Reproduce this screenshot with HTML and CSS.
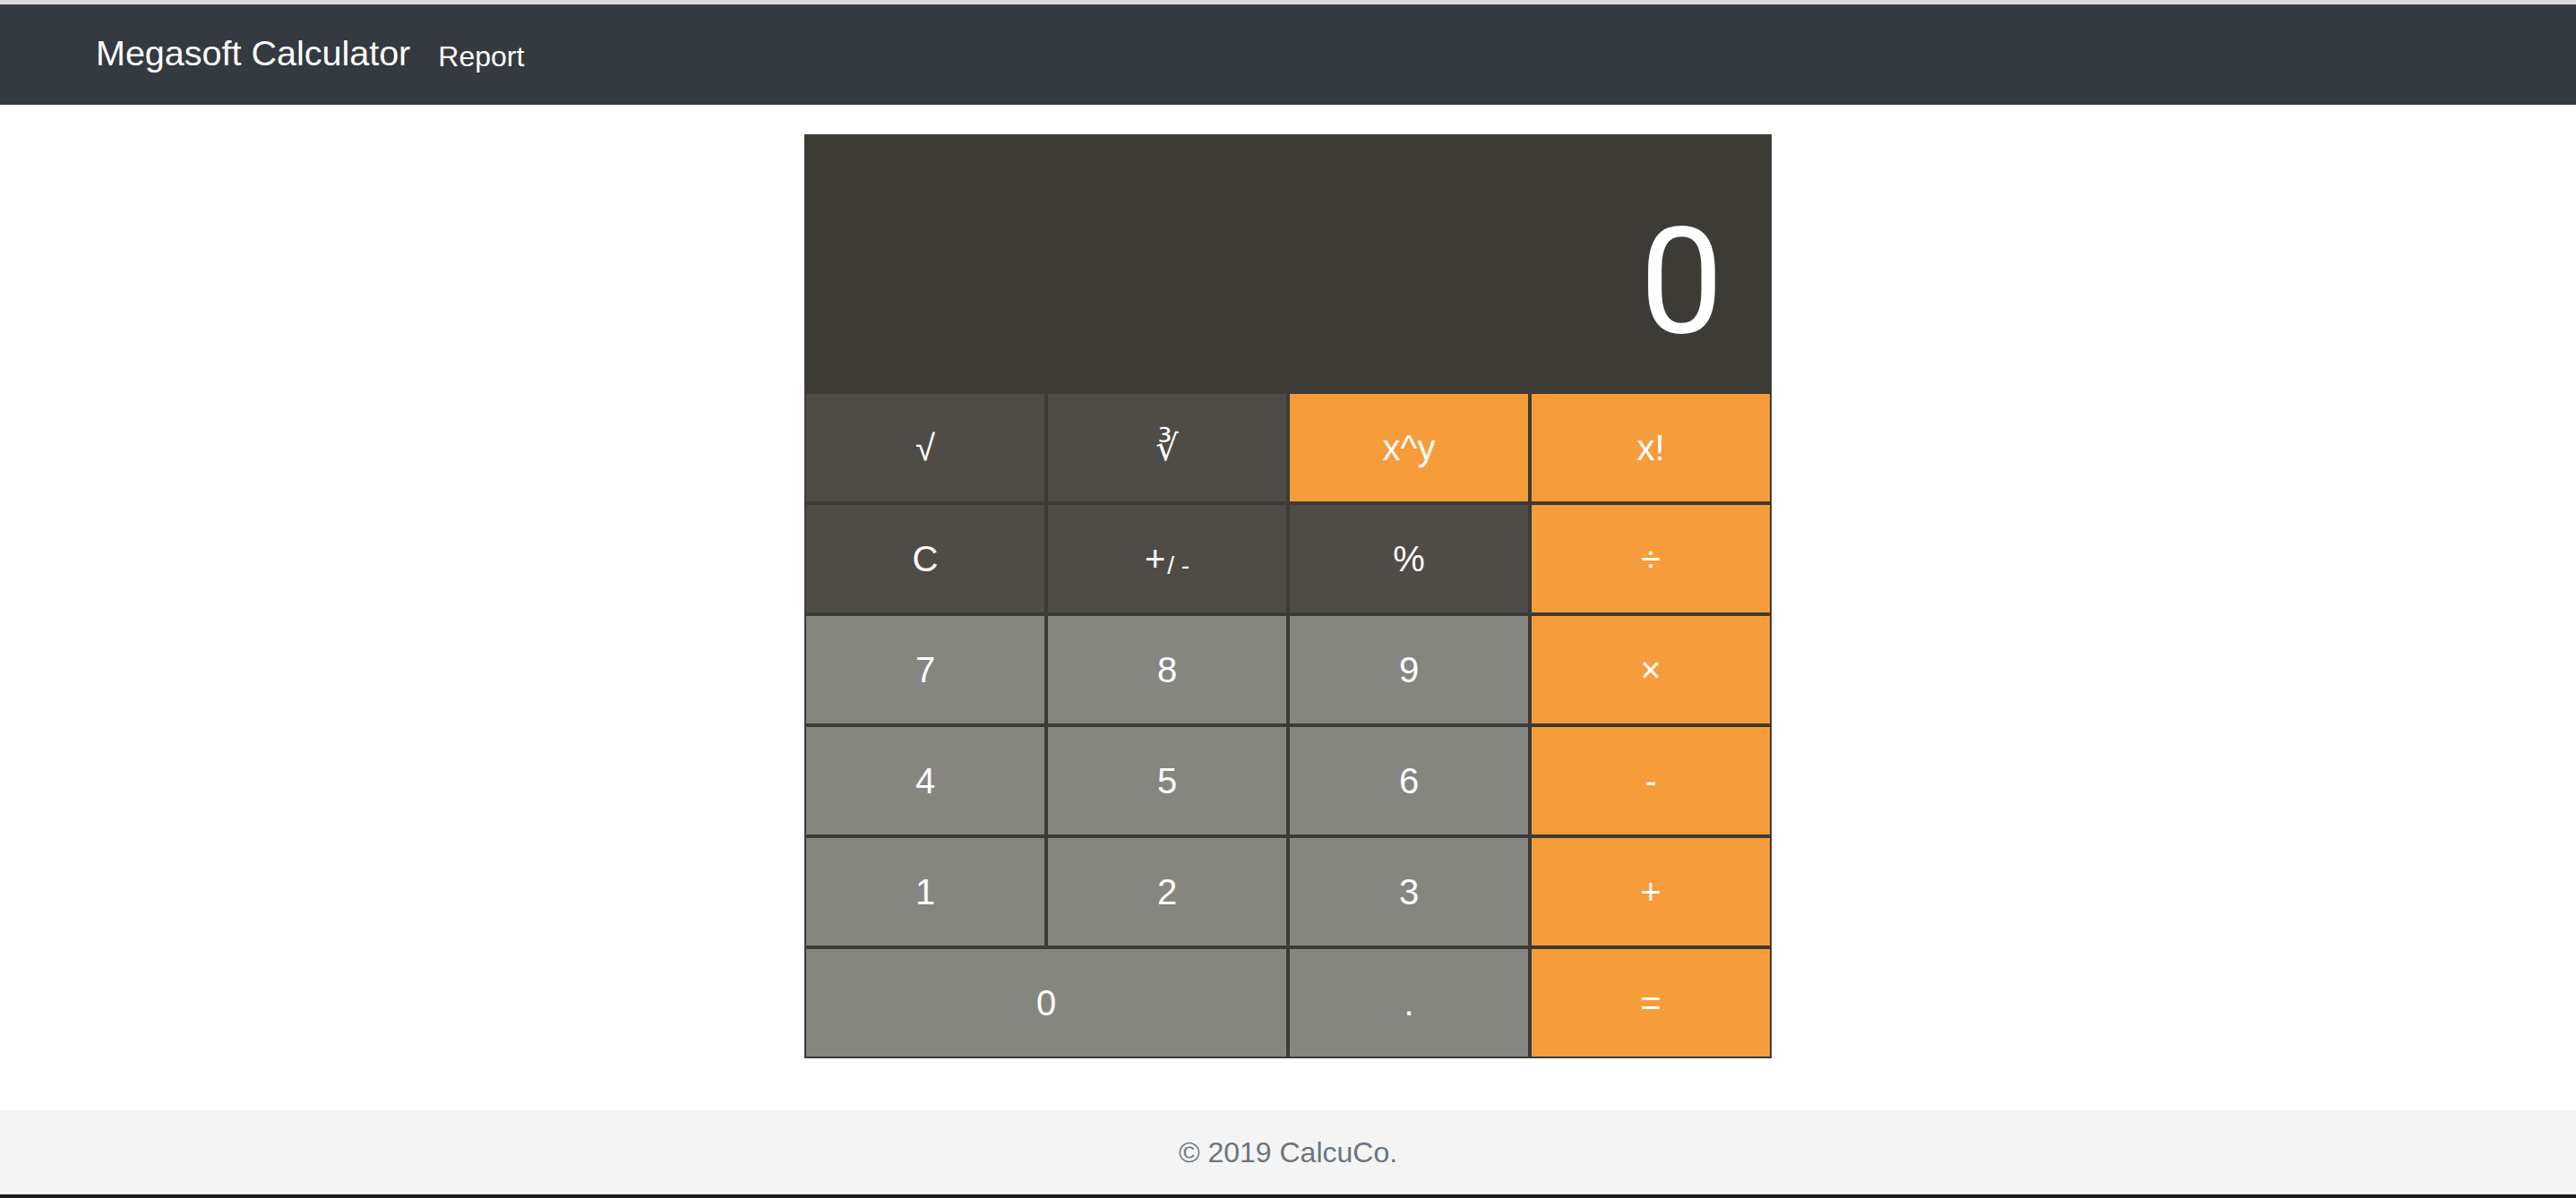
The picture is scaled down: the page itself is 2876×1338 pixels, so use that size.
FILE: index.html
```html
<!DOCTYPE html>
<html lang="en">
<head>
<meta charset="utf-8">
<title>Megasoft Calculator</title>
<link rel="stylesheet" href="styles.css">
</head>
<body>
<header class="navbar">
  <a class="brand" href="#">Megasoft Calculator</a>
  <a class="nav-link" href="#">Report</a>
</header>
<main class="main">
  <div class="calc">
    <div class="display"><span class="display-value">0</span></div>
    <div class="keys">
      <button class="key key-dark">√</button>
      <button class="key key-dark">∛</button>
      <button class="key key-op">x^y</button>
      <button class="key key-op">x!</button>

      <button class="key key-dark">C</button>
      <button class="key key-dark">+<sub class="sub">/ -</sub></button>
      <button class="key key-dark">%</button>
      <button class="key key-op">÷</button>

      <button class="key key-light">7</button>
      <button class="key key-light">8</button>
      <button class="key key-light">9</button>
      <button class="key key-op">×</button>

      <button class="key key-light">4</button>
      <button class="key key-light">5</button>
      <button class="key key-light">6</button>
      <button class="key key-op">-</button>

      <button class="key key-light">1</button>
      <button class="key key-light">2</button>
      <button class="key key-light">3</button>
      <button class="key key-op">+</button>

      <button class="key key-light key-wide">0</button>
      <button class="key key-light">.</button>
      <button class="key key-op">=</button>
    </div>
  </div>
</main>
<footer class="footer">© 2019 CalcuCo.</footer>
</body>
</html>
```

FILE: styles.css
```css
* {
  box-sizing: border-box;
}

html, body {
  margin: 0;
  padding: 0;
  background: #ffffff;
  font-family: "Liberation Sans", Arial, "DejaVu Sans", sans-serif;
}

.navbar {
  display: flex;
  align-items: center;
  height: 117px;
  border-top: 5px solid #d9d9d9;
  background: #343a40;
  padding: 0 0 0 107px;
}

.brand {
  color: #ffffff;
  text-decoration: none;
  font-size: 39.5px;
  line-height: 1;
  margin-right: 31px;
  position: relative;
  top: -1px;
}

.nav-link {
  color: #ffffff;
  text-decoration: none;
  font-size: 32px;
  line-height: 1;
  position: relative;
  top: 2px;
}

.main {
  display: flex;
  justify-content: center;
  padding: 33px 0 58px;
}

.calc {
  width: 1080px;
  background: #3d3b36;
}

.display {
  height: 288px;
  display: flex;
  justify-content: flex-end;
  align-items: flex-end;
  padding: 0 54px 40px 0;
  background: #3d3b36;
}

.display-value {
  color: #ffffff;
  font-family: Roboto, "Liberation Sans", sans-serif;
  font-weight: 400;
  font-size: 166px;
  line-height: 1;
}

.keys {
  display: grid;
  grid-template-columns: repeat(4, 1fr);
  grid-auto-rows: 124px;
}

.key {
  border: 2px solid #3d3b36;
  margin: 0;
  padding: 0;
  color: #ffffff;
  font-family: "Liberation Sans", Arial, "DejaVu Sans", sans-serif;
  font-size: 40px;
  line-height: 1;
  display: flex;
  align-items: center;
  justify-content: center;
  cursor: pointer;
}

.key-dark {
  background: #4f4c47;
}

.key-light {
  background: #868681;
}

.key-op {
  background: #f79c3b;
}

.key-wide {
  grid-column: span 2;
}

.sub {
  font-size: 28px;
  position: relative;
  top: 8px;
  margin-left: 2px;
}

.footer {
  height: 98px;
  background: #f4f4f4;
  border-bottom: 4px solid #1c1c1c;
  color: #6c757d;
  font-size: 32px;
  display: flex;
  align-items: center;
  justify-content: center;
}
```
